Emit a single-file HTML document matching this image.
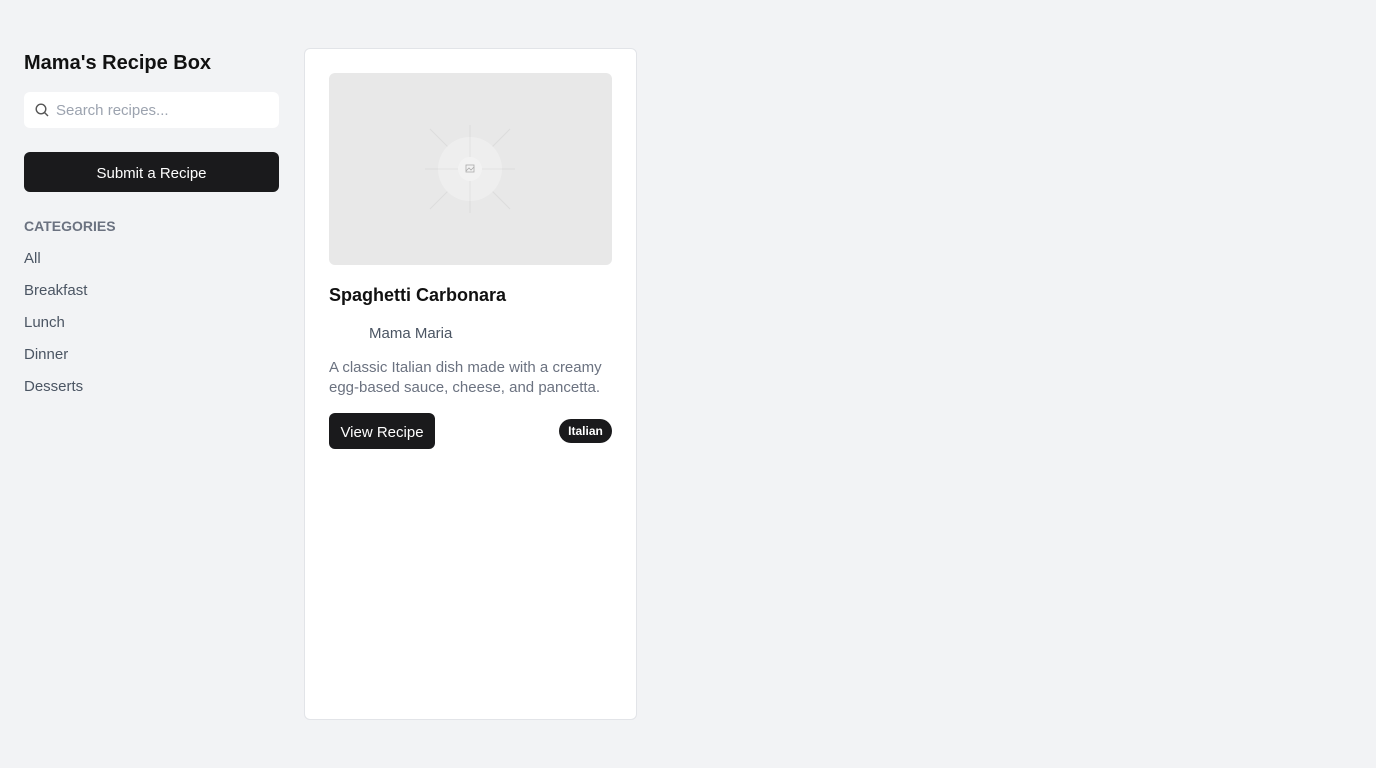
<!DOCTYPE html>
<html><head><meta charset="utf-8"><style>
*{box-sizing:border-box;margin:0;padding:0}
body{width:1376px;height:768px;background:#f2f3f5;font-family:"Liberation Sans",sans-serif;position:relative;overflow:hidden}
.abs{position:absolute}
h1{position:absolute;left:24px;top:52px;font-size:20px;font-weight:bold;color:#111}
.search{left:24px;top:92px;width:255px;height:36px;background:#fff;border-radius:6px}
.search span{position:absolute;left:32px;top:10px;font-size:15px;color:#9ca3af}
.btn{left:24px;top:152px;width:255px;height:40px;background:#1a1a1c;border-radius:6px;color:#fff;font-size:15px;display:flex;align-items:center;justify-content:center;padding-top:2px}
.cat{left:24px;top:218px;font-size:14px;font-weight:bold;color:#6b7280}
.li{left:24px;font-size:15px;color:#4b5563}
.card{left:304px;top:48px;width:333px;height:672px;background:#fff;border:1px solid #e2e4e8;border-radius:6px}
.img{left:329px;top:73px;width:283px;height:192px;background:#e8e8e8;border-radius:6px;overflow:hidden}
.title{left:329px;top:285px;font-size:18px;font-weight:bold;color:#111}
.author{left:369px;top:325px;font-size:15px;color:#4b5563}
.desc{left:329px;top:358px;font-size:15px;line-height:20px;color:#6b7280;width:290px}
.vr{left:329px;top:413px;width:106px;height:36px;background:#1a1a1c;border-radius:6px;color:#fff;font-size:15px;display:flex;align-items:center;justify-content:center;padding-top:2px}
.tag{left:559px;top:419px;width:53px;height:24px;background:#1a1a1c;border-radius:12px;color:#fff;font-size:12px;font-weight:bold;line-height:24px;text-align:center}
</style></head><body>
<h1>Mama's Recipe Box</h1>
<div class="abs search"><svg class="abs" style="left:11px;top:11px" width="14" height="14" viewBox="0 0 14 14" fill="none" stroke="#555" stroke-width="1.4"><circle cx="6" cy="6" r="4.8"/><path d="M9.5 9.5L13 13"/></svg><span>Search recipes...</span></div>
<div class="abs btn">Submit a Recipe</div>
<div class="abs cat">CATEGORIES</div>
<div class="abs li" style="top:250px">All</div>
<div class="abs li" style="top:282px">Breakfast</div>
<div class="abs li" style="top:314px">Lunch</div>
<div class="abs li" style="top:346px">Dinner</div>
<div class="abs li" style="top:378px">Desserts</div>
<div class="abs card"></div>
<div class="abs img"><svg width="283" height="192" viewBox="0 0 283 192"><g stroke="#dcdcdc" stroke-width="1"><line x1="101" y1="56" x2="181" y2="136"/><line x1="181" y1="56" x2="101" y2="136"/><line x1="96" y1="96" x2="186" y2="96"/><line x1="141" y1="52" x2="141" y2="140"/></g><circle cx="141" cy="96" r="32" fill="#eeeeee"/><g stroke="#e2e2e2"><line x1="141" y1="64" x2="141" y2="128"/><line x1="109" y1="96" x2="173" y2="96"/></g><circle cx="141" cy="96" r="12" fill="#f2f2f2"/><rect x="137" y="92" width="8" height="7" fill="none" stroke="#aaa" stroke-width="0.8"/><path d="M137 98l3-3 2 2 3-3" fill="none" stroke="#aaa" stroke-width="0.8"/></svg></div>
<div class="abs title">Spaghetti Carbonara</div>
<div class="abs author">Mama Maria</div>
<div class="abs desc">A classic Italian dish made with a creamy egg-based sauce, cheese, and pancetta.</div>
<div class="abs vr">View Recipe</div>
<div class="abs tag">Italian</div>
</body></html>
